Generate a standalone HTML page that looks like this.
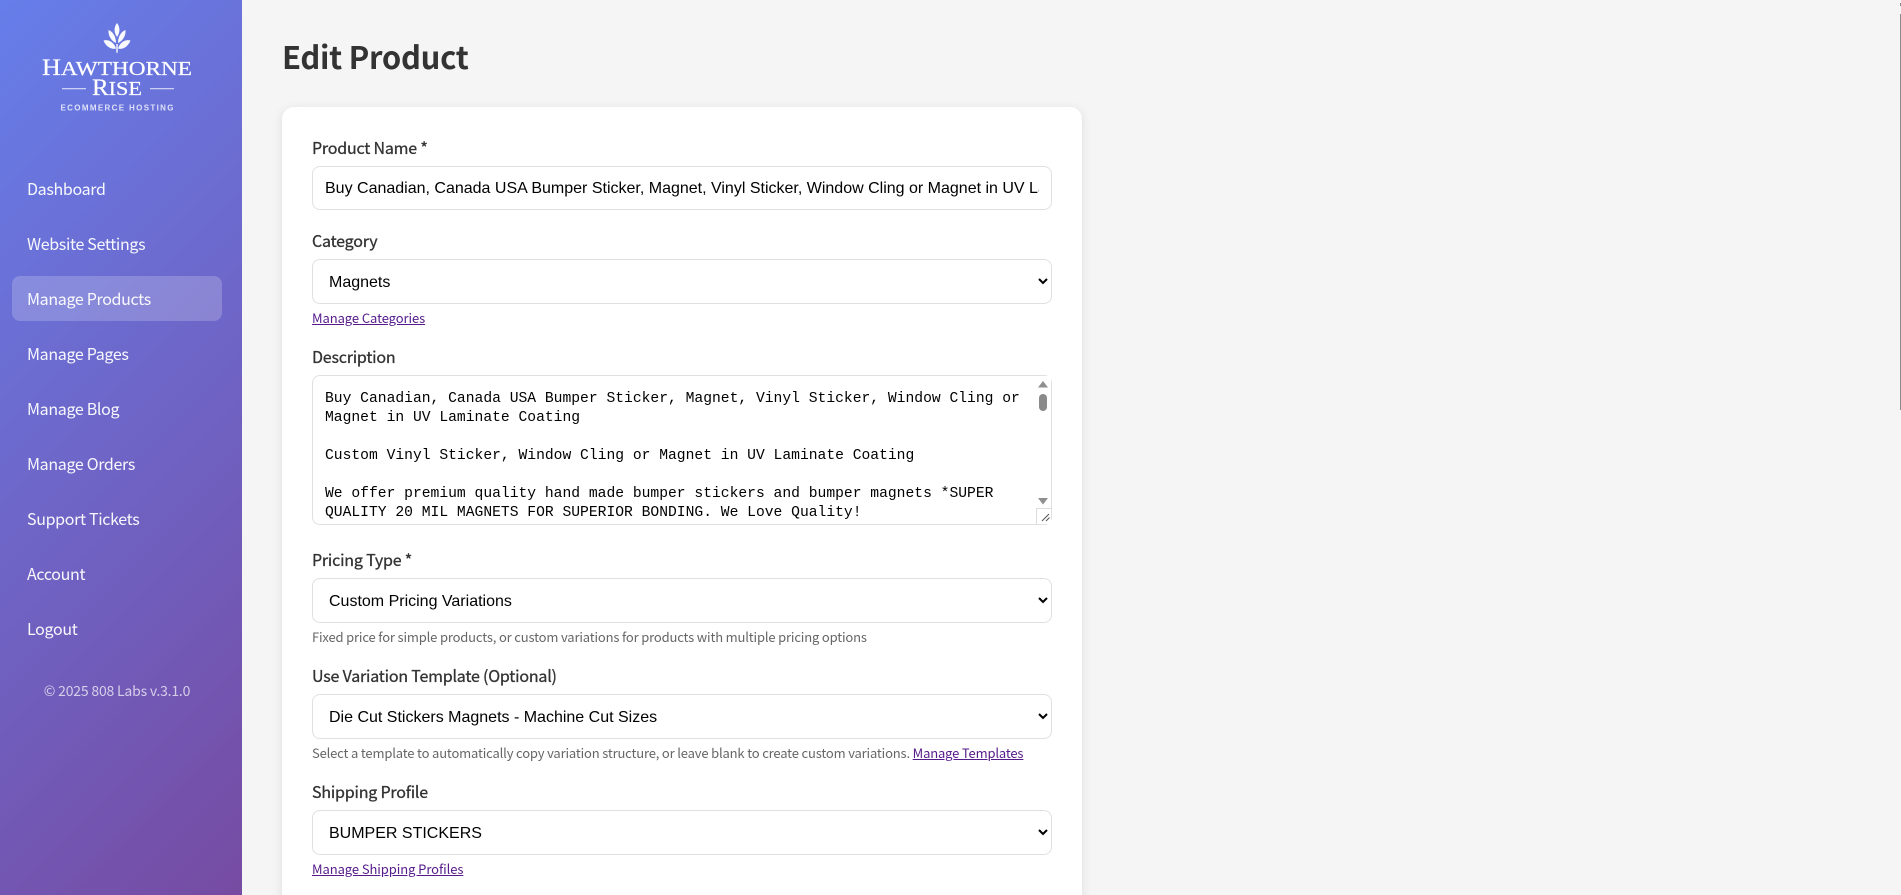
<!DOCTYPE html>
<html lang="en"><head><meta charset="utf-8"><title>Edit Product</title>
<style>
*{box-sizing:border-box}
html,body{margin:0;padding:0;width:1901px;height:895px;overflow:hidden;background:#f5f5f5}
body{position:relative;font-family:"Noto Sans CJK SC","Liberation Sans",sans-serif;color:#333}
.side{position:absolute;left:0;top:0;width:242px;height:895px;background:linear-gradient(135deg,#667eea,#764ba2)}
.nav{position:absolute;left:27px;color:rgba(255,255,255,.95);font-size:16px;line-height:22px;height:22px;white-space:nowrap;letter-spacing:-.33px}
.active{position:absolute;left:12px;top:276px;width:210px;height:45px;border-radius:8px;background:rgba(255,255,255,.2)}
.copy{position:absolute;left:0;width:234px;top:681px;text-align:center;font-size:14px;line-height:20px;color:rgba(255,255,255,.7);letter-spacing:-.2px}
h1{position:absolute;left:282px;top:33px;margin:0;font-size:31px;line-height:46px;font-weight:700;color:#333;letter-spacing:-.3px}
.card{position:absolute;left:282px;top:107px;width:800px;height:820px;background:#fff;border-radius:12px;box-shadow:0 2px 10px rgba(0,0,0,.1)}
.lb{position:absolute;left:312px;font-size:16px;line-height:22px;font-weight:400;color:#333;white-space:nowrap;letter-spacing:-.2px;-webkit-text-stroke:.3px #333}
.f{position:absolute;left:312px;width:740px;border:1px solid #e0e0e0;border-radius:8px;background:#fff;font-family:"Liberation Sans",Arial,sans-serif;font-size:16px;color:#000;margin:0}
input.f{height:44px;padding:13px 12px 11px}
select.f{height:45px;padding:13px 12px 12px}
.help,.lnk{position:absolute;left:312px;font-size:13px;line-height:18px;white-space:nowrap}
.help{color:#666;letter-spacing:-.165px}
.lnk{letter-spacing:-.08px}
a{color:#551a8b;text-decoration:underline}
textarea.f{top:375px;height:150px;padding:14px 12px 10px;font-family:"Liberation Mono",monospace;font-size:14.67px;line-height:19px;overflow:hidden;resize:none;white-space:pre;color:#000}
</style></head><body>
<div class="side">
<svg style="position:absolute;left:0;top:0;filter:blur(.3px)" width="242" height="125" viewBox="0 0 242 125">
<g fill="#fff" opacity=".96">
<path d="M117 23C120 27 120.500 32 117 37C113.500 32 114 27 117 23z"/>
<path d="M108.500 30C112.500 31.500 116 36 116 43C111.500 41 108 36 108.500 30z"/>
<path d="M125.500 30C121.500 31.500 118 36 118 43C122.500 41 126 36 125.500 30z"/>
<path d="M103.500 40.500C108 39 114 42 116 48.500C111 50 105.500 46 103.500 40.500z"/>
<path d="M130.500 40.500C126 39 120 42 118 48.500C123 50 128.500 46 130.500 40.500z"/>
<path d="M116.300 44h1.400V52l-.7 1.500l-.7-1.500z"/>
</g>
<text x="117" y="75" text-anchor="middle" font-family="Liberation Serif" font-size="23" fill="#fff" stroke="#fff" stroke-width=".2" textLength="150" lengthAdjust="spacingAndGlyphs">H<tspan font-size="20.500">AWTHORNE</tspan></text>
<text x="117" y="95" text-anchor="middle" font-family="Liberation Serif" font-size="23" fill="#fff" stroke="#fff" stroke-width=".2" textLength="50" lengthAdjust="spacingAndGlyphs">R<tspan font-size="20.500">ISE</tspan></text>
<rect x="62" y="88" width="24" height="1.300" fill="#fff" opacity=".65"/>
<rect x="150" y="88" width="24" height="1.300" fill="#fff" opacity=".65"/>
<text x="117" y="110.500" text-anchor="middle" font-family="Liberation Sans" font-size="8" font-weight="700" fill="#fff" opacity=".78" textLength="113" lengthAdjust="spacing">ECOMMERCE HOSTING</text>
</svg>
<div class="active"></div>
<div class="nav" style="top:177px">Dashboard</div>
<div class="nav" style="top:232px">Website Settings</div>
<div class="nav" style="top:287px">Manage Products</div>
<div class="nav" style="top:342px">Manage Pages</div>
<div class="nav" style="top:397px">Manage Blog</div>
<div class="nav" style="top:452px">Manage Orders</div>
<div class="nav" style="top:507px">Support Tickets</div>
<div class="nav" style="top:562px">Account</div>
<div class="nav" style="top:617px">Logout</div>
<div class="copy">© 2025 808 Labs v.3.1.0</div>
</div>

<h1>Edit Product</h1>
<div class="card"></div>

<div class="lb" style="top:136px">Product Name *</div>
<input class="f" style="top:166px" type="text" value="Buy Canadian, Canada USA Bumper Sticker, Magnet, Vinyl Sticker, Window Cling or Magnet in UV Laminate Coating">

<div class="lb" style="top:229px">Category</div>
<select class="f" style="top:259px"><option>Magnets</option></select>
<div class="lnk" style="top:309px"><a href="#">Manage Categories</a></div>

<div class="lb" style="top:345px">Description</div>
<textarea class="f">Buy Canadian, Canada USA Bumper Sticker, Magnet, Vinyl Sticker, Window Cling or
Magnet in UV Laminate Coating

Custom Vinyl Sticker, Window Cling or Magnet in UV Laminate Coating

We offer premium quality hand made bumper stickers and bumper magnets *SUPER
QUALITY 20 MIL MAGNETS FOR SUPERIOR BONDING. We Love Quality!</textarea>
<svg style="position:absolute;left:1030px;top:376px" width="22" height="148" viewBox="0 0 22 148">
<rect x="6" y="0" width="15" height="148" fill="#fff"/>
<path d="M13 5l5 6.500H8z" fill="#8f8f8f"/>
<rect x="9" y="18" width="8" height="17" rx="4" fill="#8a8a8a"/>
<path d="M8 122h10l-5 6.500z" fill="#8f8f8f"/>
<path d="M6.500 148v-15.500H21.500" fill="#fff" stroke="#dcdcdc"/>
<path d="M12 145l7-7M16 145l3.500-3.500" stroke="#555" stroke-width="1" fill="none"/>
</svg>

<div class="lb" style="top:548px">Pricing Type *</div>
<select class="f" style="top:578px"><option>Custom Pricing Variations</option></select>
<div class="help" style="top:628px">Fixed price for simple products, or custom variations for products with multiple pricing options</div>

<div class="lb" style="top:664px">Use Variation Template (Optional)</div>
<select class="f" style="top:694px"><option>Die Cut Stickers Magnets - Machine Cut Sizes</option></select>
<div class="help" style="top:744px">Select a template to automatically copy variation structure, or leave blank to create custom variations. <a href="#">Manage Templates</a></div>

<div class="lb" style="top:780px">Shipping Profile</div>
<select class="f" style="top:810px"><option>BUMPER STICKERS</option></select>
<div class="lnk" style="top:860px"><a href="#">Manage Shipping Profiles</a></div>

<div style="position:absolute;left:1900px;top:3px;width:1px;height:3px;background:#888"></div>
<div style="position:absolute;left:1900px;top:14px;width:1px;height:396px;background:#8a8a8a"></div>
</body></html>
